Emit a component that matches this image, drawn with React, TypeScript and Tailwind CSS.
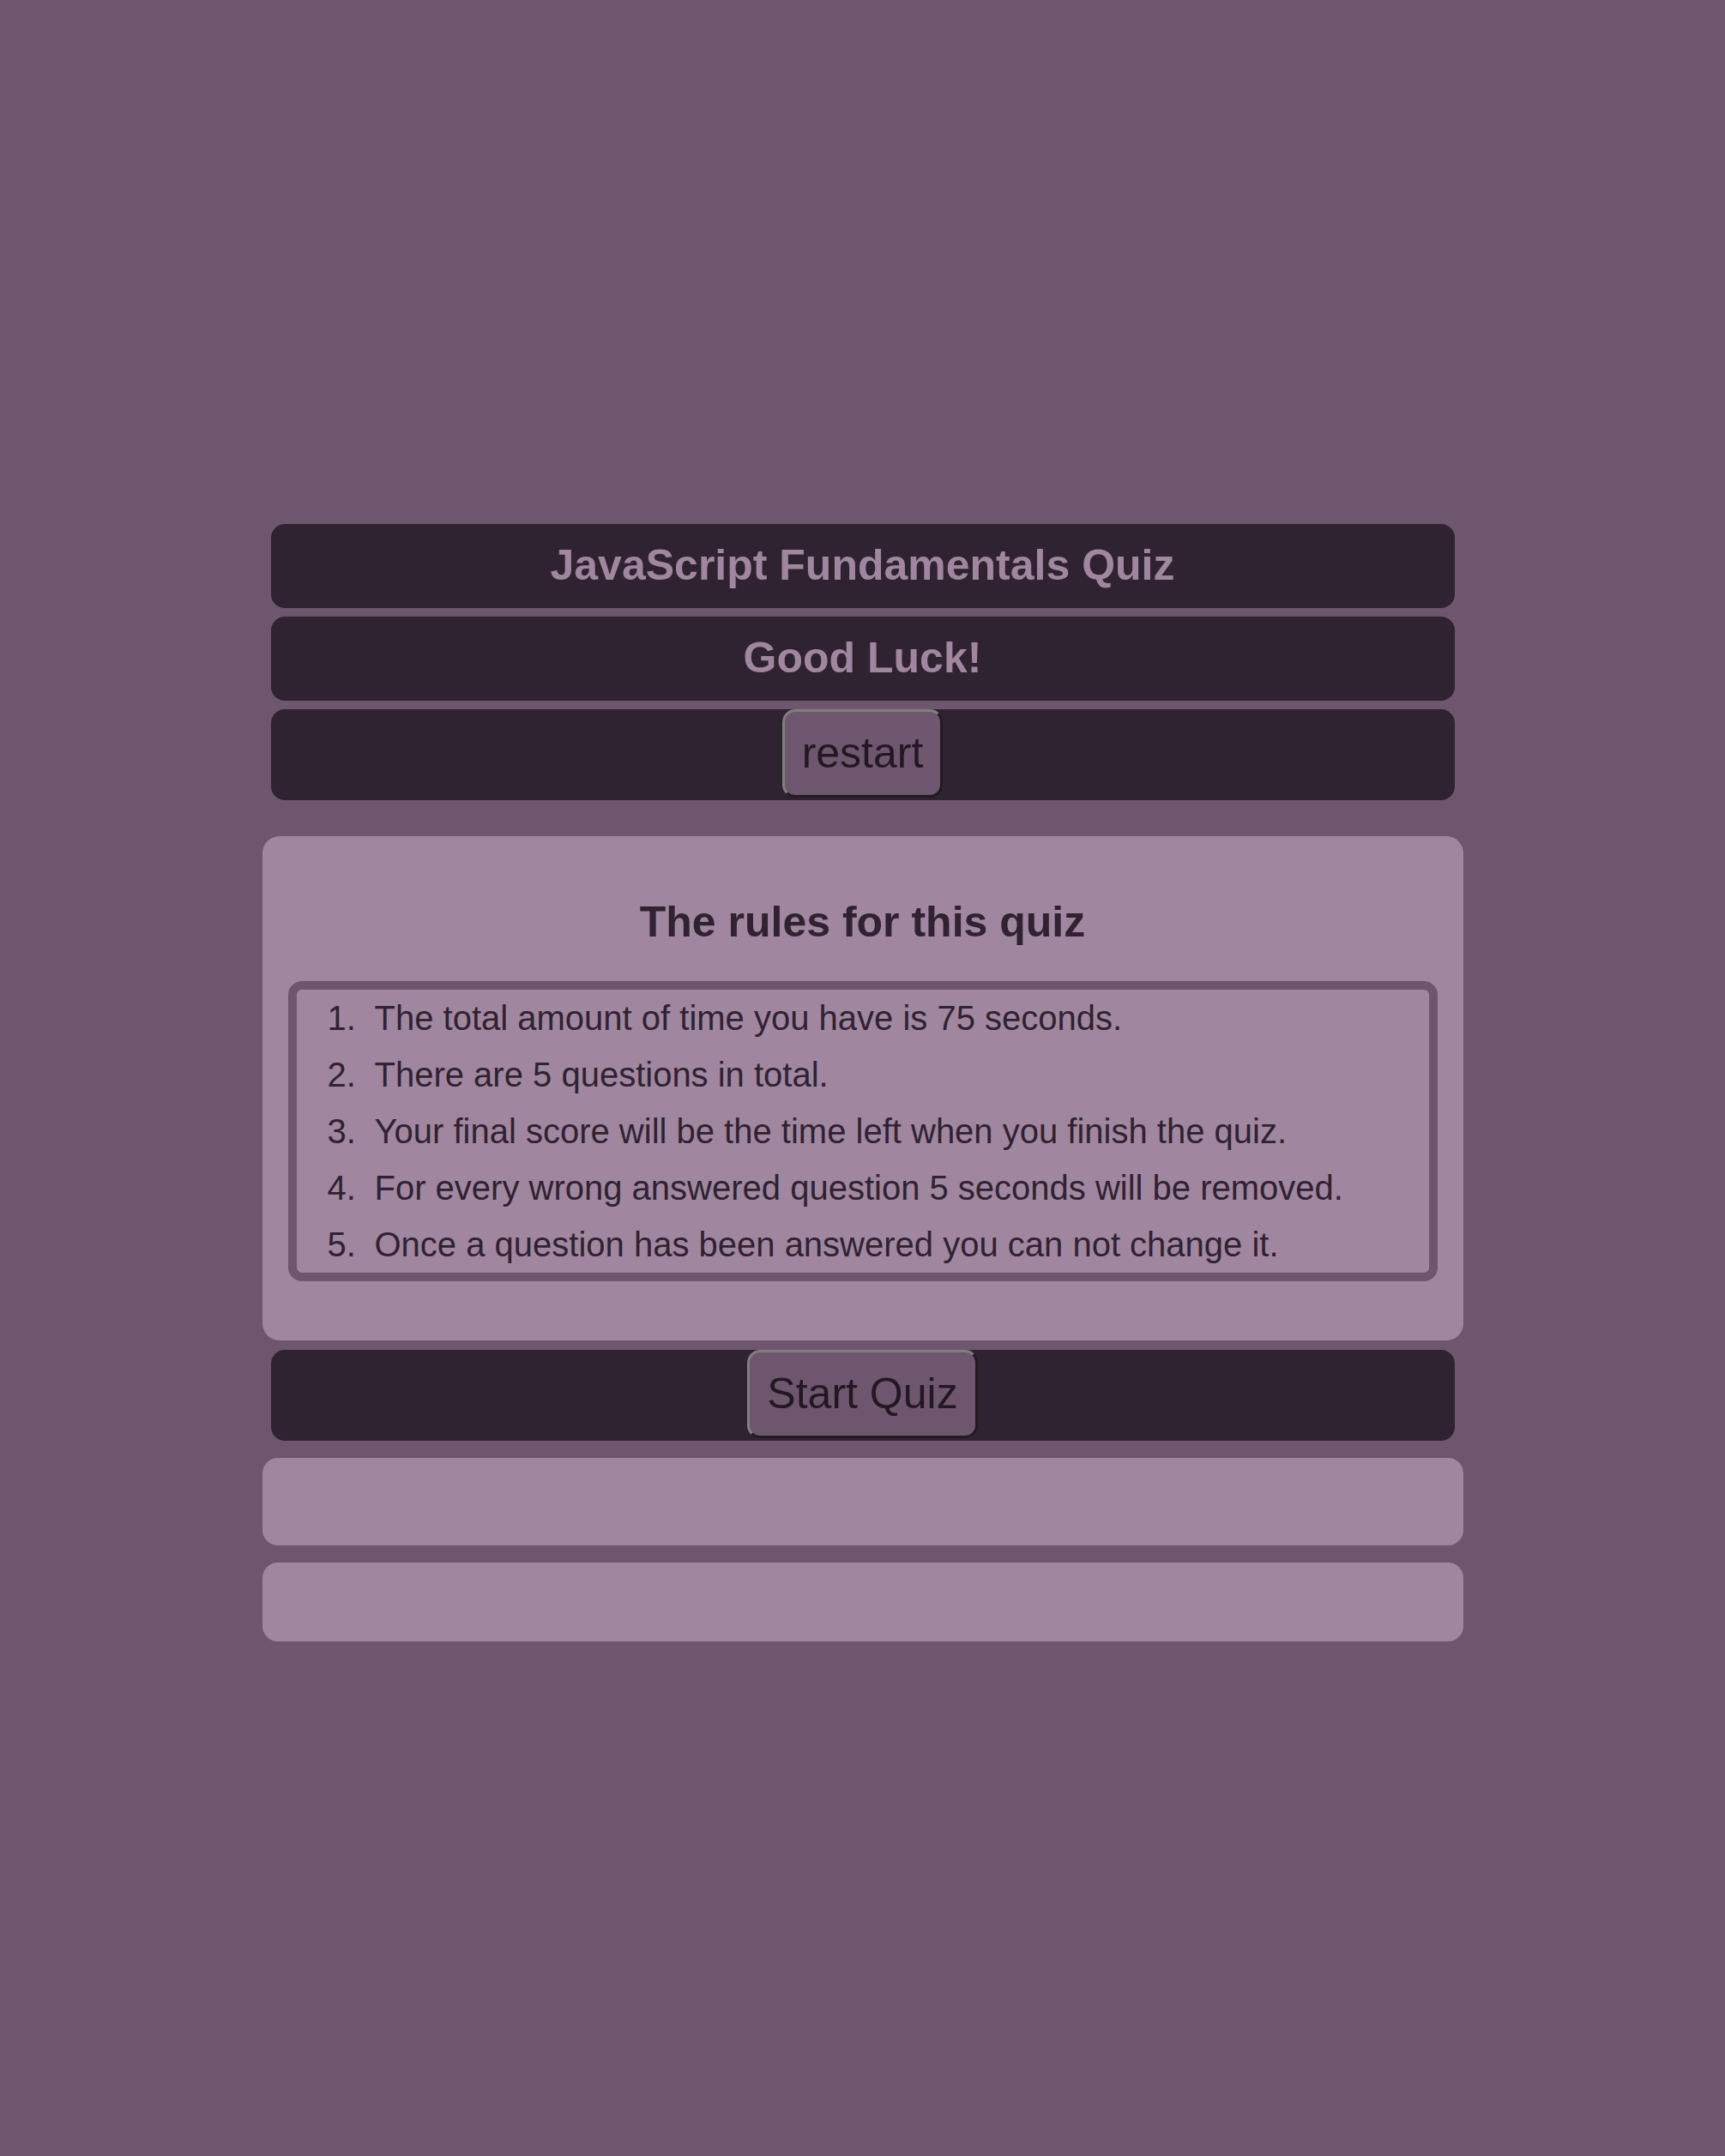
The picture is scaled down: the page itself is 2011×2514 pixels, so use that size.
const rules = [
  "The total amount of time you have is 75 seconds.",
  "There are 5 questions in total.",
  "Your final score will be the time left when you finish the quiz.",
  "For every wrong answered question 5 seconds will be removed.",
  "Once a question has been answered you can not change it.",
];

function QuizButton({ label }: { label: string }) {
  return (
    <button className="h-[103px] px-[20px] rounded-[15px] bg-[#6e566e] text-[50px] leading-[57px] text-[#221822] border-[3px] border-t-[#7f7f7f] border-l-[#7f7f7f] border-r-[#211b21] border-b-[#211b21]">
      {label}
    </button>
  );
}

export default function App() {
  return (
    <div className="min-h-[2514px] bg-[#6e566e] flex flex-col items-center justify-center pt-[10px] font-['Liberation_Sans',Arial,sans-serif]">
      <div className="w-[1400px] flex flex-col">
        <header className="mx-[10px] flex flex-col gap-[10px]">
          <div className="h-[98px] rounded-[16px] bg-[#2f2231] flex items-center justify-center">
            <h1 className="text-[50px] font-bold text-[#a0879f]">JavaScript Fundamentals Quiz</h1>
          </div>
          <div className="h-[98px] rounded-[16px] bg-[#2f2231] flex items-center justify-center">
            <h2 className="text-[50px] font-bold text-[#a0879f]">Good Luck!</h2>
          </div>
          <div className="h-[106px] rounded-[16px] bg-[#2f2231] flex items-start justify-center">
            <QuizButton label="restart" />
          </div>
        </header>

        <section className="mt-[42px] rounded-[20px] bg-[#a0879f] pt-[72px] pb-[69px] px-[30px]">
          <h2 className="text-center text-[50px] leading-[57px] font-bold text-[#2f2231]">
            The rules for this quiz
          </h2>
          <ol className="mt-[40px] border-[10px] border-[#6e566e] rounded-[16px] pl-[36px] text-[40px] leading-[66px] text-[#2f2231]">
            {rules.map((rule, i) => (
              <li key={i} className="flex">
                <span className="w-[55px] shrink-0">{i + 1}.</span>
                <span>{rule}</span>
              </li>
            ))}
          </ol>
        </section>

        <div className="mt-[11px] mx-[10px] h-[106px] rounded-[16px] bg-[#2f2231] flex items-start justify-center">
          <QuizButton label="Start Quiz" />
        </div>

        <div className="mt-[20px] h-[102px] rounded-[18px] bg-[#a0879f]" />
        <div className="mt-[20px] h-[92px] rounded-[18px] bg-[#a0879f]" />
      </div>
    </div>
  );
}
